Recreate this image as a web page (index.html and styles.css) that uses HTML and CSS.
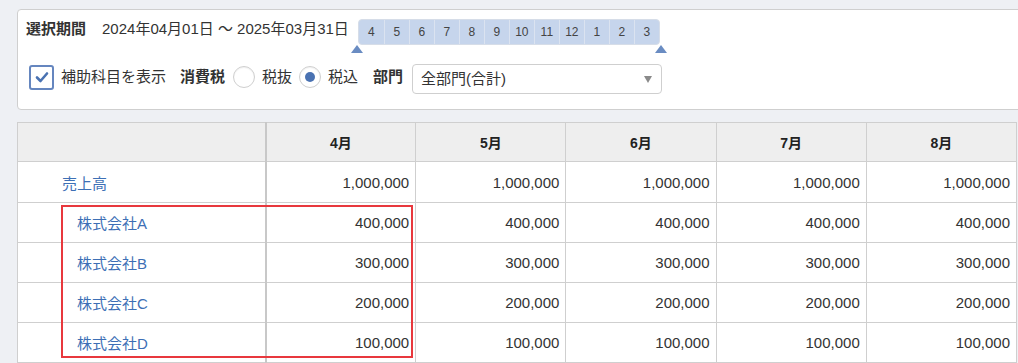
FILE: index.html
```html
<!DOCTYPE html>
<html lang="ja">
<head>
    <meta charset="UTF-8">
    <meta name="viewport" content="width=device-width, initial-scale=1.0">
    <title>月次推移表</title>
    <link rel="stylesheet" href="styles.css">
</head>
<body>
    <div class="page">
        <div class="filter-panel">
            <div class="filter-row period-row">
                <span class="filter-label">選択期間</span>
                <span class="period-text">2024年04月01日 ～ 2025年03月31日</span>
                <div class="month-slider">
                    <span class="month">4</span>
                    <span class="month">5</span>
                    <span class="month">6</span>
                    <span class="month">7</span>
                    <span class="month">8</span>
                    <span class="month">9</span>
                    <span class="month">10</span>
                    <span class="month">11</span>
                    <span class="month">12</span>
                    <span class="month">1</span>
                    <span class="month">2</span>
                    <span class="month">3</span>
                    <span class="handle handle-start"></span>
                    <span class="handle handle-end"></span>
                </div>
            </div>
            <div class="filter-row options-row">
                <label class="check">
                    <span class="check-box">
                        <svg width="16" height="16" viewBox="0 0 16 16">
                            <path d="M3 8.5 L6.5 12 L13 4.5" fill="none" stroke="#4a72b2" stroke-width="2.6" stroke-linecap="round" stroke-linejoin="round"/>
                        </svg>
                    </span>
                    補助科目を表示
                </label>
                <span class="filter-label tax-label">消費税</span>
                <label class="radio"><span class="radio-dot"></span>税抜</label>
                <label class="radio"><span class="radio-dot checked"></span>税込</label>
                <span class="filter-label dept-label">部門</span>
                <div class="select-box">
                    <span>全部門(合計)</span>
                    <span class="select-arrow"></span>
                </div>
            </div>
        </div>

        <div class="table-wrap">
            <table class="report-table">
                <colgroup>
                    <col class="col-name">
                    <col class="col-month">
                    <col class="col-month">
                    <col class="col-month">
                    <col class="col-month">
                    <col class="col-month">
                </colgroup>
                <thead>
                    <tr>
                        <th class="name-cell"></th>
                        <th>4月</th>
                        <th>5月</th>
                        <th>6月</th>
                        <th>7月</th>
                        <th>8月</th>
                    </tr>
                </thead>
                <tbody>
                    <tr class="total-row">
                        <td class="name-cell account">売上高</td>
                        <td>1,000,000</td>
                        <td>1,000,000</td>
                        <td>1,000,000</td>
                        <td>1,000,000</td>
                        <td>1,000,000</td>
                    </tr>
                    <tr>
                        <td class="name-cell sub-account">株式会社A</td>
                        <td>400,000</td>
                        <td>400,000</td>
                        <td>400,000</td>
                        <td>400,000</td>
                        <td>400,000</td>
                    </tr>
                    <tr>
                        <td class="name-cell sub-account">株式会社B</td>
                        <td>300,000</td>
                        <td>300,000</td>
                        <td>300,000</td>
                        <td>300,000</td>
                        <td>300,000</td>
                    </tr>
                    <tr>
                        <td class="name-cell sub-account">株式会社C</td>
                        <td>200,000</td>
                        <td>200,000</td>
                        <td>200,000</td>
                        <td>200,000</td>
                        <td>200,000</td>
                    </tr>
                    <tr>
                        <td class="name-cell sub-account">株式会社D</td>
                        <td>100,000</td>
                        <td>100,000</td>
                        <td>100,000</td>
                        <td>100,000</td>
                        <td>100,000</td>
                    </tr>
                </tbody>
            </table>
            <div class="highlight-box"></div>
        </div>
    </div>
</body>
</html>
```

FILE: styles.css
```css
body {
    margin: 0;
    background-color: #eef0f4;
    font-family: "Liberation Sans", "Noto Sans CJK JP", sans-serif;
    font-size: 15px;
    color: #333;
    overflow: hidden;
}

.page {
    width: 1200px;
    padding: 9px 0 0 17px;
}

.filter-panel {
    background-color: #fff;
    border: 1px solid #cfcfcf;
    border-radius: 4px;
    padding: 9px 0 15px 8px;
}

.filter-row {
    display: flex;
}

.period-row {
    align-items: flex-start;
    margin-bottom: 19px;
}

.options-row {
    align-items: center;
}

.filter-label {
    font-weight: bold;
    line-height: 20px;
}

.period-text {
    line-height: 20px;
    margin-left: 16px;
}

.month-slider {
    position: relative;
    display: flex;
    margin-left: 9px;
    background-color: #c6d5ec;
    border: 1px solid #d6dde8;
    border-radius: 4px;
}

.month {
    width: 25px;
    height: 24px;
    line-height: 24px;
    text-align: center;
    font-size: 12px;
    color: #444;
    border-left: 1px solid #dbe3f0;
    box-sizing: border-box;
}

.month:first-child {
    border-left: none;
}

.handle {
    position: absolute;
    top: 100%;
    width: 0;
    height: 0;
    border-left: 6px solid transparent;
    border-right: 6px solid transparent;
    border-bottom: 8px solid #6a8cc2;
    margin-top: 1px;
}

.handle-start {
    left: -8px;
}

.handle-end {
    right: -8px;
}

.check {
    display: flex;
    align-items: center;
    margin-left: 3px;
    margin-bottom: 4px;
    line-height: 20px;
}

.check-box {
    display: flex;
    align-items: center;
    justify-content: center;
    width: 21px;
    height: 21px;
    border: 2px solid #6586bf;
    border-radius: 3px;
    margin-right: 7px;
}

.tax-label {
    margin-left: 14px;
    margin-right: 8px;
    margin-bottom: 4px;
}

.radio {
    display: flex;
    align-items: center;
    margin-right: 7px;
    margin-bottom: 4px;
    line-height: 20px;
}

.radio-dot {
    position: relative;
    width: 20px;
    height: 20px;
    border: 1px solid #cfcfcf;
    border-radius: 50%;
    margin-right: 7px;
    box-shadow: inset 0 1px 1px rgba(0, 0, 0, 0.06);
}

.radio-dot.checked::after {
    content: "";
    position: absolute;
    left: 5px;
    top: 5px;
    width: 10px;
    height: 10px;
    border-radius: 50%;
    background-color: #4a72b2;
}

.dept-label {
    margin-left: 8px;
    margin-right: 9px;
    margin-bottom: 4px;
}

.select-box {
    display: flex;
    align-items: center;
    justify-content: space-between;
    width: 250px;
    height: 30px;
    box-sizing: border-box;
    border: 1px solid #cfcfcf;
    border-radius: 4px;
    padding: 0 9px 0 8px;
    line-height: 20px;
}

.select-arrow {
    width: 0;
    height: 0;
    border-left: 4px solid transparent;
    border-right: 4px solid transparent;
    border-top: 7px solid #8a8a8a;
}

.table-wrap {
    position: relative;
    margin-top: 12px;
}

.report-table {
    border-collapse: collapse;
    table-layout: fixed;
    width: 1000px;
    background-color: #fff;
}

.col-name {
    width: 248px;
}

.report-table th,
.report-table td {
    border: 1px solid #cfcfcf;
    padding: 0 6px;
}

.report-table th {
    height: 38px;
    background-color: #eeeeee;
    font-size: 14px;
    font-weight: bold;
    text-align: center;
    color: #222;
}

.report-table td {
    height: 39px;
    text-align: right;
}

.report-table .total-row td {
    height: 40px;
}

.report-table .name-cell {
    border-right: 2px solid #c8c8c8;
    text-align: left;
}

.account {
    color: #3d6fb5;
    padding-left: 44px !important;
}

.sub-account {
    color: #3d6fb5;
    padding-left: 59px !important;
}

.highlight-box {
    position: absolute;
    left: 44px;
    top: 83px;
    width: 348px;
    height: 149px;
    border: 2px solid #e8383d;
}
```
